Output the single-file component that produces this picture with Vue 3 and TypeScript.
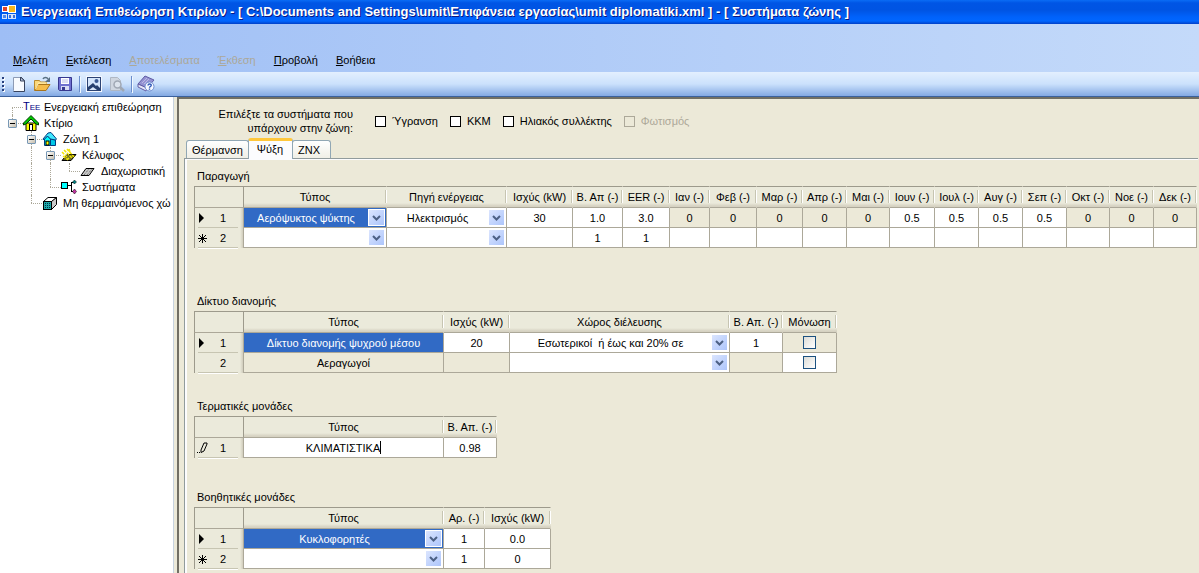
<script setup lang="ts">
import { ref } from 'vue'

type Guide = 'none' | 'line' | 'start' | 'tee' | 'end'

interface TreeNode {
  label: string
  icon: string
  guides: Guide[]
  toggle?: boolean
}

interface Cell {
  text?: string
  kind?: 'text' | 'combo' | 'check' | 'edit'
  selected?: boolean
  locked?: boolean
}

interface GridRow {
  marker: '' | 'current' | 'new' | 'edit'
  cells: Cell[]
}

interface Grid {
  id: string
  title: string
  columns: { label: string; width: number }[]
  rows: GridRow[]
}

const menus = [
  { key: 'Μ', rest: 'ελέτη', disabled: false },
  { key: 'Ε', rest: 'κτέλεση', disabled: false },
  { key: 'Α', rest: 'ποτελέσματα', disabled: true },
  { key: 'Έ', rest: 'κθεση', disabled: true },
  { key: 'Π', rest: 'ροβολή', disabled: false },
  { key: 'Β', rest: 'οήθεια', disabled: false },
]

const tree: TreeNode[] = [
  { label: 'Ενεργειακή επιθεώρηση', icon: 'tee', guides: ['start'] },
  { label: 'Κτίριο', icon: 'building', guides: ['end'], toggle: true },
  { label: 'Ζώνη 1', icon: 'zone', guides: ['none', 'tee'], toggle: true },
  { label: 'Κέλυφος', icon: 'shell', guides: ['none', 'line', 'tee'], toggle: true },
  { label: 'Διαχωριστική', icon: 'partition', guides: ['none', 'line', 'line', 'end'] },
  { label: 'Συστήματα', icon: 'systems', guides: ['none', 'line', 'end'] },
  { label: 'Μη θερμαινόμενος χώ', icon: 'unheated', guides: ['none', 'end'] },
]

const systems = ref([
  { id: 'humid', label: 'Ύγρανση', on: false, disabled: false },
  { id: 'ahu', label: 'ΚΚΜ', on: false, disabled: false },
  { id: 'solar', label: 'Ηλιακός συλλέκτης', on: false, disabled: false },
  { id: 'light', label: 'Φωτισμός', on: false, disabled: true },
])

const tabs = ['Θέρμανση', 'Ψύξη', 'ΖΝΧ']
const activeTab = ref(1)

const t = (text = ''): Cell => ({ text })
const locked = (text = ''): Cell => ({ text, locked: true })
const combo = (text = '', selected = false): Cell => ({ text, kind: 'combo', selected })

const col = (label: string, width: number) => ({ label, width })

const grids = ref<Grid[]>([
  {
    id: 'production',
    title: 'Παραγωγή',
    columns: [
      col('Τύπος', 143), col('Πηγή ενέργειας', 120), col('Ισχύς (kW)', 66),
      col('Β. Απ (-)', 50), col('EER (-)', 47), col('Ιαν (-)', 40), col('Φεβ (-)', 47),
      col('Μαρ (-)', 46), col('Απρ (-)', 44), col('Μαι (-)', 43), col('Ιουν (-)', 45),
      col('Ιουλ (-)', 44), col('Αυγ (-)', 44), col('Σεπ (-)', 44), col('Οκτ (-)', 43),
      col('Νοε (-)', 44), col('Δεκ (-)', 43),
    ],
    rows: [
      {
        marker: 'current',
        cells: [
          combo('Αερόψυκτος ψύκτης', true), combo('Ηλεκτρισμός'), t('30'), t('1.0'), t('3.0'),
          ...Array.from({ length: 5 }, () => locked('0')),
          ...Array.from({ length: 4 }, () => t('0.5')),
          ...Array.from({ length: 3 }, () => locked('0')),
        ],
      },
      {
        marker: 'new',
        cells: [combo(), combo(), t(), t('1'), t('1'), ...Array.from({ length: 12 }, () => t())],
      },
    ],
  },
  {
    id: 'network',
    title: 'Δίκτυο διανομής',
    columns: [
      col('Τύπος', 200), col('Ισχύς (kW)', 66), col('Χώρος διέλευσης', 220),
      col('Β. Απ. (-)', 53), col('Μόνωση', 54),
    ],
    rows: [
      {
        marker: 'current',
        cells: [
          { text: 'Δίκτυο διανομής ψυχρού μέσου', selected: true }, t('20'),
          combo('Εσωτερικοί\u00a0 ή έως και 20% σε'), t('1'), { kind: 'check', locked: true },
        ],
      },
      { marker: '', cells: [locked('Αεραγωγοί'), locked(), combo(), locked(), { kind: 'check' }] },
    ],
  },
  {
    id: 'terminal',
    title: 'Τερματικές μονάδες',
    columns: [col('Τύπος', 200), col('Β. Απ. (-)', 53)],
    rows: [{ marker: 'edit', cells: [{ text: 'ΚΛΙΜΑΤΙΣΤΙΚΑ', kind: 'edit' }, t('0.98')] }],
  },
  {
    id: 'auxiliary',
    title: 'Βοηθητικές μονάδες',
    columns: [col('Τύπος', 200), col('Αρ. (-)', 41), col('Ισχύς (kW)', 66)],
    rows: [
      { marker: 'current', cells: [combo('Κυκλοφορητές', true), t('1'), t('0.0')] },
      { marker: 'new', cells: [combo(), t('1'), t('0')] },
    ],
  },
])
</script>

<template>
  <div class="window">
    <header class="titlebar">
      <svg class="app-icon" width="14" height="14" viewBox="0 0 14 14" aria-hidden="true">
        <rect x="0.5" y="1.5" width="5" height="5" fill="#e0442c" stroke="#fff" />
        <rect x="6.5" y="0.5" width="7" height="7" fill="#f6b81e" stroke="#fff" />
        <rect x="0.5" y="9.5" width="4" height="4" fill="#4e86e8" stroke="#d6e4fb" />
        <rect x="6.5" y="9.5" width="3" height="4" fill="#3b6fd8" stroke="#d6e4fb" />
        <rect x="10.5" y="9.5" width="3" height="4" fill="#3b6fd8" stroke="#d6e4fb" />
      </svg>
      <h1>Ενεργειακή Επιθεώρηση Κτιρίων - [ C:\Documents and Settings\umit\Επιφάνεια εργασίας\umit diplomatiki.xml ] - [ Συστήματα ζώνης ]</h1>
    </header>

    <nav class="menubar">
      <button v-for="m in menus" :key="m.rest" type="button" :disabled="m.disabled"><u>{{ m.key }}</u>{{ m.rest }}</button>
    </nav>

    <div class="toolbar" role="toolbar">
      <span class="grip" aria-hidden="true"><i></i><i></i><i></i><i></i></span>
      <button type="button" aria-label="Νέο">
        <svg width="16" height="16" viewBox="0 0 16 16">
          <path d="M3 1h7l4 4v10H3z" fill="#f8fbff" />
          <path d="M2.5 14.500V1.500H10" fill="none" stroke="#8d9bb5" />
          <path d="M2.500 15.500H13.500V4.500L10 1" fill="none" stroke="#39445e" />
          <path d="M9.500 1v4H13.500z" fill="#b9c8e2" stroke="#39445e" />
        </svg>
      </button>
      <button type="button" aria-label="Άνοιγμα">
        <svg width="18" height="16" viewBox="0 0 18 16">
          <path d="M1.500 14V4.500h5l1 1.500h6v3" fill="#fbd878" stroke="#b98b2f" />
          <path d="M1.500 14.500L5 8.500h12L13 14.500z" fill="#f5bd4b" stroke="#a8741c" />
          <path d="M2.500 13l3-6h9" fill="none" stroke="#fff0b8" />
          <path d="M10 3c1-2 4-2 5 0" fill="none" stroke="#5a7184" stroke-width="1.500" />
          <path d="M17 1v5h-5z" fill="#5a7184" />
        </svg>
      </button>
      <button type="button" aria-label="Αποθήκευση">
        <svg width="16" height="16" viewBox="0 0 16 16">
          <path d="M1.500 1.500h13v13h-12l-1-1z" fill="#6f70cf" stroke="#37388f" />
          <rect x="4" y="2" width="8" height="6" fill="#fff" />
          <path d="M5 4h6M5 6h6" stroke="#b9bce6" />
          <rect x="4" y="10" width="8" height="4" fill="#d8dcf4" />
          <rect x="5" y="11" width="3" height="3" fill="#37388f" />
        </svg>
      </button>
      <span class="divider"></span>
      <button type="button" aria-label="Εικόνα">
        <svg width="16" height="16" viewBox="0 0 16 16">
          <rect x="0.500" y="0.500" width="15" height="15" fill="#fff" stroke="#f4f8ff" />
          <rect x="1.500" y="1.500" width="13" height="13" fill="#d5e6fc" stroke="#2c4374" />
          <path d="M2 11l5-4 3 3 1-1 3 3v2H2z" fill="#27406f" />
          <circle cx="10.500" cy="5" r="2" fill="#3c5a93" />
          <path d="M3 14l4-3 4 3z" fill="#dbe9fd" />
        </svg>
      </button>
      <button type="button" aria-label="Προεπισκόπηση" disabled>
        <svg width="16" height="16" viewBox="0 0 16 16">
          <path d="M1.500 1.500h7l3 3v10h-10z" fill="#cfd6e0" stroke="#b0b8c4" />
          <circle cx="8.500" cy="8.500" r="3.500" fill="#dce3ec" stroke="#a0a8b4" stroke-width="1.500" />
          <path d="M11 11l4 4" stroke="#a0a8b4" stroke-width="2.500" />
        </svg>
      </button>
      <span class="divider"></span>
      <button type="button" aria-label="Βοήθεια">
        <svg width="18" height="18" viewBox="0 0 18 18">
          <path d="M1 9L8 1l9 4-7 8z" fill="#9492d2" stroke="#5f5ba4" />
          <path d="M1 9v3l8 4 1-3z" fill="#e6e6f6" stroke="#5f5ba4" />
          <path d="M5 8l5-5M7 9l5-5" stroke="#bab9e6" />
          <circle cx="12.500" cy="11.500" r="4.500" fill="#f4f8ff" stroke="#6f8ed0" />
          <path d="M11 10.500c0-2 3.500-2 3.200 0 0 1-1.700 1-1.700 2.200M12.500 13.500v1.200" fill="none" stroke="#2f58b8" stroke-width="1.400" />
        </svg>
      </button>
    </div>

    <div class="body">
      <aside class="tree" role="tree">
        <div v-for="node in tree" :key="node.label" class="node" role="treeitem">
          <span v-for="(g, i) in node.guides" :key="i" class="guide" :class="g">
            <button v-if="node.toggle && i === node.guides.length - 1" type="button" class="toggle" :aria-label="node.label"></button>
          </span>
          <span v-if="node.icon === 'tee'" class="tee-icon">T<small>EE</small></span>
          <svg v-else-if="node.icon === 'building'" width="16" height="16" viewBox="0 0 16 16">
            <path d="M3 8h10v7.500H3z" fill="#ffff00" stroke="#000" />
            <path d="M8 0.500L0.500 8v2l2.500-1 5-5 5 5 2.500 1V8z" fill="#00c800" stroke="#003c00" />
            <rect x="6.500" y="9.500" width="3" height="6" fill="#fff" stroke="#000" />
          </svg>
          <svg v-else-if="node.icon === 'zone'" width="16" height="16" viewBox="0 0 16 16">
            <path d="M2.500 8v6.500h6V8L5.500 5z" fill="#00ffff" stroke="#003c80" />
            <path d="M8.500 14.500h5V9l-5-1z" fill="#00c8e8" stroke="#003c80" />
            <path d="M1 8l5-6 3-0.500L14.500 8l-1 1-5-1-3-3-4 4z" fill="#40e8ff" stroke="#003c80" />
            <rect x="4" y="10" width="3" height="4" fill="#ffff00" stroke="#000" />
          </svg>
          <svg v-else-if="node.icon === 'shell'" width="16" height="16" viewBox="0 0 16 16">
            <path d="M1 13.500L6 7.500h9l-5 6z" fill="#6d6d20" stroke="#000" />
            <path d="M1 5l7 7M3 3l8 8M6 2l7 8M2 9l5 4M8 2l1 3" stroke="#f4e400" stroke-width="1.500" stroke-dasharray="3 1" />
          </svg>
          <svg v-else-if="node.icon === 'partition'" width="16" height="16" viewBox="0 0 16 16">
            <path d="M1 12.500L6 5.500h8l-5 7z" fill="#c8c8c8" stroke="#000" />
            <path d="M4 12l5-6M7 12l5-6" stroke="#555" stroke-dasharray="1 1" />
          </svg>
          <svg v-else-if="node.icon === 'systems'" width="16" height="16" viewBox="0 0 16 16">
            <path d="M7 6.500h4M10.500 3v10M10 3.500h3M10 12.500h4" stroke="#000" fill="none" />
            <rect x="0.500" y="3.500" width="6" height="6" fill="#00ffff" stroke="#000" />
            <path d="M13.500 1l2 2-2 2-2-2z" fill="#008080" stroke="#000" stroke-width="0.500" />
            <path d="M13.500 10l2 2.500-2 2.500-2-2.500z" fill="#c030a0" stroke="#000" stroke-width="0.500" />
          </svg>
          <svg v-else width="16" height="16" viewBox="0 0 16 16">
            <path d="M1.500 6.500L6 2.500h8.500l-4.500 4z" fill="#fff" stroke="#000" />
            <path d="M9.500 6.500l5-4v7l-5 5z" fill="#c8c8c8" stroke="#000" />
            <rect x="1.500" y="6.500" width="8" height="8" fill="#20a8a8" stroke="#000" />
            <path d="M3 8.500h5M3 10.500h5M3 12.500h5" stroke="#00384c" stroke-dasharray="1 1" />
          </svg>
          <span class="node-label">{{ node.label }}</span>
        </div>
      </aside>

      <main class="content">
        <div class="systems" role="group" aria-labelledby="systems-hint">
          <p id="systems-hint">Επιλέξτε τα συστήματα που υπάρχουν στην ζώνη:</p>
          <label v-for="s in systems" :key="s.id" :class="{ off: s.disabled }">
            <input v-model="s.on" type="checkbox" :disabled="s.disabled" />{{ s.label }}
          </label>
        </div>

        <div class="tabs" role="tablist">
          <button
            v-for="(name, i) in tabs"
            :key="name"
            type="button"
            role="tab"
            :aria-selected="activeTab === i"
            :class="{ active: activeTab === i }"
            @click="activeTab = i"
          >{{ name }}</button>
        </div>

        <section class="page" role="tabpanel">
          <table v-for="g in grids" :key="g.id" :class="g.id">
            <caption>{{ g.title }}</caption>
            <colgroup>
              <col class="head-col" />
              <col v-for="c in g.columns" :key="c.label" :style="{ width: c.width + 'px' }" />
            </colgroup>
            <thead>
              <tr>
                <td class="corner"></td>
                <th v-for="c in g.columns" :key="c.label" scope="col">{{ c.label }}</th>
              </tr>
            </thead>
            <tbody>
              <tr v-for="(row, r) in g.rows" :key="r">
                <th scope="row">
                  <span class="row-head">
                    <svg width="12" height="12" viewBox="0 0 12 12" aria-hidden="true">
                      <path v-if="row.marker === 'current'" d="M3 1l5 5-5 5z" fill="#000" />
                      <path v-else-if="row.marker === 'new'" d="M6.500 2v9M2 6.500h9M3 3l7 7M10 3l-7 7" stroke="#000" />
                      <g v-else-if="row.marker === 'edit'" fill="none" stroke="#000">
                        <path d="M5 10.500V8l3-7h3v1L8 9z" />
                        <path d="M1 10.500h1M3 10.500h1" />
                      </g>
                    </svg>
                    {{ r + 1 }}
                  </span>
                </th>
                <td v-for="(cell, c) in row.cells" :key="c" :class="{ selected: cell.selected, locked: cell.locked }">
                  <span v-if="cell.kind === 'combo'" class="combo">
                    <select :aria-label="g.columns[c].label">
                      <option>{{ cell.text }}</option>
                    </select>
                    <span class="arrow" aria-hidden="true">
                      <svg width="9" height="6" viewBox="0 0 9 6"><path d="M1 1l3.500 3.500L8 1" fill="none" stroke="#4d6185" stroke-width="2" /></svg>
                    </span>
                  </span>
                  <input v-else-if="cell.kind === 'check'" type="checkbox" class="cell-check" :aria-label="g.columns[c].label" />
                  <span v-else-if="cell.kind === 'edit'" class="edit">
                    <input v-model="cell.text" type="text" size="12" :aria-label="g.columns[c].label" /><i class="caret"></i>
                  </span>
                  <template v-else>{{ cell.text }}</template>
                </td>
              </tr>
            </tbody>
          </table>
        </section>
      </main>
    </div>
  </div>
</template>

<style>
body {
  margin: 0;
  background: #ece9d8;
}
</style>

<style scoped>
.window {
  display: flex;
  flex-direction: column;
  height: 100vh;
  overflow: hidden;
  background: #ece9d8;
  color: #000;
  font-family: "Liberation Sans", Arial, sans-serif;
  font-size: 11px;
  line-height: 14px;
}

button,
input,
select {
  margin: 0;
  padding: 0;
  border: 0;
  background: none;
  color: inherit;
  font: inherit;
}

svg {
  display: block;
  flex: none;
}

.titlebar {
  display: flex;
  flex: none;
  align-items: center;
  gap: 5px;
  height: 24px;
  padding: 0 2px;
  box-sizing: border-box;
  background: linear-gradient(#0a6cf5 0, #0055e5 3px, #0054e3 10px, #0062fb 17px, #0066ff 21px, #0040c8 24px);
  color: #fff;
}

.titlebar h1 {
  margin: 0;
  font-size: 13px;
  font-weight: 700;
  line-height: 20px;
  text-shadow: 1px 1px 0 #0a1883;
  white-space: nowrap;
}

.menubar {
  display: flex;
  flex: none;
  align-items: flex-end;
  gap: 18px;
  height: 48px;
  padding: 0 13px 5px;
  box-sizing: border-box;
  background: linear-gradient(90deg, #9ebef5, #c4dafa);
}

.menubar button {
  line-height: 14px;
}

.menubar button:disabled {
  color: #aca899;
}

.toolbar {
  display: flex;
  flex: none;
  align-items: center;
  height: 25px;
  box-sizing: border-box;
  border-bottom: 1px solid #3b619c;
  background: linear-gradient(#e3effe, #cbe1fc 50%, #83a9e3);
}

.toolbar button {
  width: 23px;
  display: flex;
  justify-content: center;
}

.grip {
  display: flex;
  flex-direction: column;
  gap: 2px;
  width: 5px;
  padding-left: 2px;
}

.grip i {
  width: 2px;
  height: 2px;
  background: #27417e;
  box-shadow: 1px 1px 0 #fff;
}

.divider {
  width: 1px;
  height: 16px;
  margin: 0 2px 0 3px;
  background: #6a8ccb;
  box-shadow: 1px 1px 0 #f1f9ff;
}

.body {
  display: flex;
  flex: 1;
  min-height: 0;
}

.tree {
  flex: none;
  width: 174px;
  padding: 2px 0 0 4px;
  box-sizing: border-box;
  overflow: hidden;
  border-right: 1px solid #c8d4e0;
  background: #fff;
}

.node {
  display: flex;
  align-items: center;
  height: 16px;
  white-space: nowrap;
}

.node-label {
  padding-left: 5px;
}

.guide {
  position: relative;
  flex: none;
  width: 19px;
  height: 16px;
}

.guide::before {
  content: "";
  position: absolute;
  left: 8px;
  top: 0;
  height: 16px;
  border-left: 1px dotted #aca899;
}

.guide::after {
  content: "";
  position: absolute;
  left: 8px;
  right: 0;
  top: 8px;
  border-top: 1px dotted #aca899;
}

.guide.none::before,
.guide.none::after,
.guide.line::after {
  display: none;
}

.guide.start::before {
  top: 8px;
  height: 8px;
}

.guide.end::before {
  height: 8px;
}

.toggle {
  position: absolute;
  z-index: 1;
  left: 4px;
  top: 4px;
  width: 9px;
  height: 9px;
  border: 1px solid #7898b5;
  border-radius: 1px;
  background: linear-gradient(#000, #000) center / 5px 1px no-repeat, linear-gradient(135deg, #fff, #c6bead);
}

.tee-icon {
  width: 16px;
  color: #000080;
}

.tee-icon small {
  font-size: 8px;
}

.content {
  flex: 1;
  min-width: 0;
  margin-left: 3px;
  padding: 8px 1px 0 5px;
  display: flex;
  flex-direction: column;
  border-top: 2px solid #716f64;
  border-left: 2px solid #716f64;
}

.systems {
  display: flex;
  align-items: center;
  height: 28px;
  margin-bottom: 3px;
}

.systems p {
  width: 169px;
  margin: 0 22px 0 0;
  line-height: 14px;
  text-align: right;
}

.systems label {
  display: flex;
  align-items: center;
  gap: 6px;
  margin-right: 12px;
  white-space: nowrap;
}

.systems label.off {
  color: #aca899;
}

.systems input {
  appearance: none;
  width: 11px;
  height: 11px;
  border: 1px solid #000;
  background: #fff;
}

.systems input:disabled {
  border-color: #aca899;
  background: #ece9d8;
}

.tabs {
  display: flex;
  align-items: flex-end;
  height: 20px;
  padding-left: 2px;
}

.tabs button {
  min-width: 39px;
  height: 18px;
  padding: 0 5px;
  border: 1px solid #91a7b4;
  border-bottom: 0;
  border-radius: 3px 3px 0 0;
  background: linear-gradient(#fff, #f0efe6);
  text-align: left;
}

.tabs button.active {
  z-index: 1;
  height: 21px;
  margin: 0 -1px -1px;
  padding: 0 9px 3px 8px;
  border-top: 3px solid #ffc73c;
  background: #fcfcfe;
}

.page {
  flex: 1;
  min-height: 0;
  padding: 7px 0 0 9px;
  border-top: 1px solid #919b9c;
  border-left: 1px solid #919b9c;
  box-shadow: inset 2px 1px 0 #fcfcfe;
}

table {
  width: 0;
  border-spacing: 0;
  table-layout: fixed;
  text-align: center;
}

caption {
  height: 20px;
  padding-left: 3px;
  line-height: 20px;
  text-align: left;
  white-space: nowrap;
}

.production {
  margin-bottom: 43px;
}

.network {
  margin-bottom: 23px;
}

.terminal {
  margin-bottom: 29px;
}

.head-col {
  width: 50px;
}

th,
td {
  box-sizing: border-box;
  height: 20px;
  padding: 0;
  border-right: 1px solid #aca899;
  border-bottom: 1px solid #aca899;
  background: #fff;
  font-weight: 400;
  line-height: 18px;
  white-space: nowrap;
}

thead th,
thead td {
  position: relative;
  height: 22px;
  border-top: 1px solid #9d9a8c;
  border-right-color: transparent;
  background: linear-gradient(#fff 0 1px, #ebeadb 1px 17px, #d6d2c2 20px) border-box;
}

thead th::after {
  content: "";
  position: absolute;
  right: 0;
  top: 3px;
  width: 1px;
  height: 13px;
  background: #c7c5b2;
  box-shadow: 1px 0 0 #fff;
}

thead .corner {
  border-left: 1px solid #9d9a8c;
  border-right-color: #9d9a8c;
  background: #ebeadb;
}

tbody th {
  position: relative;
  border-left: 1px solid #9d9a8c;
  border-bottom: 0;
  background: linear-gradient(90deg, #ebeadb 45px, #d0ccbc);
}

tbody th::after {
  content: "";
  position: absolute;
  left: 3px;
  right: 5px;
  bottom: 0;
  height: 1px;
  background: #c7c5b2;
  box-shadow: 0 1px 0 #fff;
}

.row-head {
  display: flex;
  align-items: center;
  gap: 12px;
  padding-left: 1px;
}

td.selected {
  background: #316ac5;
  color: #fff;
}

td.locked {
  background: #ece9d8;
}

.combo {
  display: flex;
  align-items: center;
  height: 19px;
  padding-right: 1px;
}

.combo select {
  flex: 1;
  min-width: 0;
  height: 19px;
  appearance: none;
  text-align: center;
  text-align-last: center;
}

.arrow {
  display: flex;
  flex: none;
  align-items: center;
  justify-content: center;
  width: 15px;
  height: 15px;
  border: 1px solid #fff;
  background: linear-gradient(135deg, #dbe5fe, #adc5fb);
}

.cell-check {
  display: block;
  appearance: none;
  width: 13px;
  height: 13px;
  margin: 0 auto;
  border: 1px solid #1c5180;
  background: linear-gradient(135deg, #dcdcd7, #fff);
}

.edit {
  display: flex;
  align-items: center;
  justify-content: center;
  height: 19px;
}

.edit input {
  field-sizing: content;
  outline: 0;
}

.caret {
  width: 1px;
  height: 13px;
  background: #000;
}
</style>
